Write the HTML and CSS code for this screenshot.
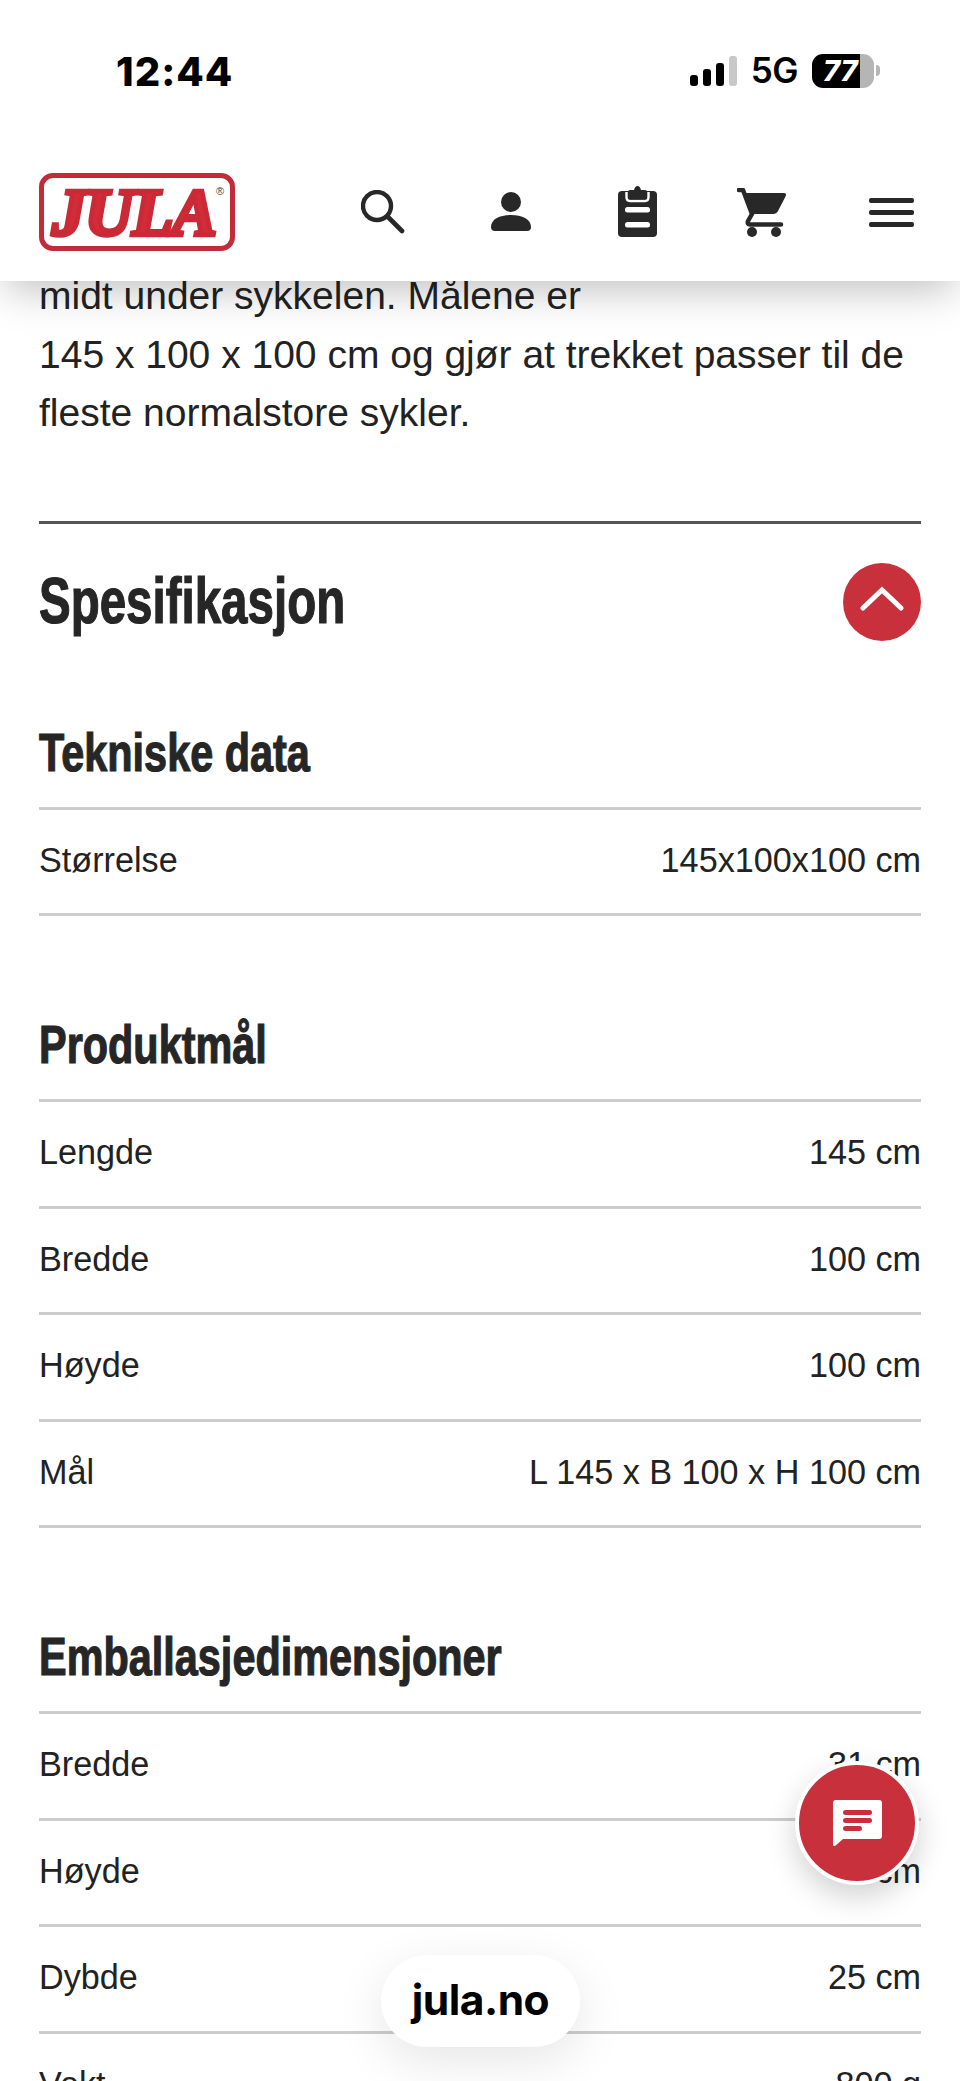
FILE: index.html
```html
<!DOCTYPE html>
<html lang="no">
<head>
<meta charset="utf-8">
<title>Jula – Spesifikasjon</title>
<link rel="stylesheet" href="styles.css">
</head>
<body>
<div class="screen">
  <header class="top">
    <div class="status">
      <span class="time">12:44</span>
      <div class="status-right">
        <div class="signal"><i class="b1"></i><i class="b2"></i><i class="b3"></i><i class="b4"></i></div>
        <span class="net">5G</span>
        <div class="battery"><span class="battery-num">77</span></div>
        <i class="battery-nub"></i>
      </div>
    </div>
    <nav class="nav">
      <a class="logo"><span class="logo-text">JULA</span><span class="logo-r">®</span></a>
      <svg class="ic ic-search" viewBox="0 0 44 44"><circle cx="16" cy="16" r="14" fill="none" stroke="#282828" stroke-width="4.4"/><path d="M26.5 26.5L41 41" stroke="#282828" stroke-width="4.6" stroke-linecap="round"/></svg>
      <svg class="ic ic-person" viewBox="0 0 40 40"><circle cx="20" cy="10" r="10" fill="#282828"/><path d="M0 35C0 27 9 23 20 23S40 27 40 35Q40 39 36 39H4Q0 39 0 35Z" fill="#282828"/></svg>
      <svg class="ic ic-clip" viewBox="0 0 39 51"><rect y="5" width="39" height="46" rx="4" fill="#282828"/><path d="M8.5 6V11Q8.5 15 12 15H27Q30.5 15 30.5 11V6" fill="none" stroke="#fff" stroke-width="2.4"/><path d="M10 12V6Q10 4 12 4H16Q17 0 19.500 0T23 4H27Q29 4 29 6V12Q29 13.500 27 13.500H12Q10 13.500 10 12Z" fill="#282828"/><rect x="7" y="21" width="25" height="5.500" rx="2.500" fill="#fff"/><rect x="7" y="36" width="25" height="5.500" rx="2.500" fill="#fff"/></svg>
      <svg class="ic ic-cart" viewBox="0 0 50 50"><path d="M6 5H47Q50 5 48.500 8.500L41 23Q39.500 26 36 26H14Z" fill="#282828"/><path d="M2 2H6L15 26L11 33Q10 36.500 13 36.500H44" fill="none" stroke="#282828" stroke-width="4.500" stroke-linecap="round" stroke-linejoin="round"/><circle cx="15" cy="44" r="5" fill="#282828"/><circle cx="39" cy="44" r="5" fill="#282828"/></svg>
      <div class="burger"><i></i><i></i><i></i></div>
    </nav>
  </header>

  <main class="content">
    <p class="lead">midt under sykkelen. Målene er<br>145 x 100 x 100 cm og gjør at trekket passer til de<br>fleste normalstore sykler.</p>
    <hr class="rule">
    <div class="spec-head">
      <h2>Spesifikasjon</h2>
      <button class="toggle" type="button"><svg viewBox="0 0 44 26"><path d="M3 22L22 4L41 22" fill="none" stroke="#fff" stroke-width="5" stroke-linecap="round" stroke-linejoin="miter"/></svg></button>
    </div>

    <section class="group first">
      <h3>Tekniske data</h3>
      <dl class="rows">
        <div class="row"><dt>Størrelse</dt><dd>145x100x100 cm</dd></div>
      </dl>
    </section>

    <section class="group">
      <h3>Produktmål</h3>
      <dl class="rows">
        <div class="row"><dt>Lengde</dt><dd>145 cm</dd></div>
        <div class="row"><dt>Bredde</dt><dd>100 cm</dd></div>
        <div class="row"><dt>Høyde</dt><dd>100 cm</dd></div>
        <div class="row"><dt>Mål</dt><dd>L 145 x B 100 x H 100 cm</dd></div>
      </dl>
    </section>

    <section class="group">
      <h3>Emballasjedimensjoner</h3>
      <dl class="rows">
        <div class="row"><dt>Bredde</dt><dd>31 cm</dd></div>
        <div class="row"><dt>Høyde</dt><dd>6 cm</dd></div>
        <div class="row"><dt>Dybde</dt><dd>25 cm</dd></div>
        <div class="row"><dt>Vekt</dt><dd>800 g</dd></div>
      </dl>
    </section>
  </main>

  <button class="chat" type="button"><svg viewBox="0 0 49 46"><path d="M3 0H46Q49 0 49 3V36Q49 39 46 39H10L2 46Q0 47 0 44V3Q0 0 3 0Z" fill="#fff"/><rect x="10" y="10" width="29" height="5" rx="2.500" fill="#c8303c"/><rect x="10" y="18" width="29" height="5" rx="2.500" fill="#c8303c"/><rect x="10" y="26" width="19" height="5" rx="2.500" fill="#c8303c"/></svg></button>
  <div class="url">jula.no</div>
</div>
</body>
</html>
```
FILE: styles.css
```css
* { box-sizing: border-box; }
html, body { margin: 0; padding: 0; background: #fff; }
body { font-family: "Liberation Sans", Arial, sans-serif; color: #222; }
.screen { position: relative; width: 960px; height: 2081px; overflow: hidden; background: #fff; }

.top { position: absolute; top: 0; left: 0; right: 0; height: 281px; background: #fff; z-index: 5; box-shadow: 0 14px 40px -6px rgba(0,0,0,.26); }
.status { height: 173px; display: flex; justify-content: space-between; padding: 50px 0 0 116px; align-items: flex-start; }
.time { font: 800 40px/44px Inter, sans-serif; color: #000; letter-spacing: 1px; }
.status-right { display: flex; align-items: flex-end; height: 38px; margin-right: 80px; }
.signal { display: flex; align-items: flex-end; gap: 5px; height: 30px; margin-right: 14px; margin-bottom: 2px; }
.signal i { width: 8px; border-radius: 3px; background: #000; display: block; }
.b1 { height: 11px; } .b2 { height: 17px; } .b3 { height: 23px; }
.signal .b4 { height: 30px; background: #c8c8c8; }
.net { font: 600 35px/36px Inter, sans-serif; color: #000; margin-right: 14px; letter-spacing: -.5px; }
.battery { width: 62px; height: 34px; border-radius: 11px; background: linear-gradient(90deg, #000 48px, #b5b5b5 48px); display: flex; align-items: center; padding-left: 11px; }
.battery-num { font: italic 800 29px/34px Inter, sans-serif; color: #fff; }
.battery-nub { width: 4px; height: 11px; background: #b5b5b5; border-radius: 0 4px 4px 0; margin: 0 0 12px 2px; }

.nav { position: relative; height: 108px; }
.logo { position: absolute; left: 39px; top: 0; width: 196px; height: 78px; border: 5px solid #c22c38; border-radius: 14px; display: flex; align-items: center; justify-content: center; background: #fff; }
.logo-text { font: italic 700 67px/67px "Liberation Serif", serif; color: #d42b38; -webkit-text-stroke: 4.5px #c92a36; letter-spacing: -1px; padding-right: 6px; }
.logo-r { position: absolute; right: 6px; top: 8px; font: 11px/11px "Liberation Sans", sans-serif; color: #444; }
.ic { position: absolute; display: block; }
.ic-search { left: 361px; top: 17px; width: 44px; height: 44px; }
.ic-person { left: 491px; top: 19px; width: 40px; height: 40px; }
.ic-clip { left: 618px; top: 13px; width: 39px; height: 51px; }
.ic-cart { left: 737px; top: 15px; width: 50px; height: 50px; }
.burger { position: absolute; left: 869px; top: 25px; width: 45px; display: flex; flex-direction: column; gap: 7px; }
.burger i { display: block; height: 5px; border-radius: 2px; background: #282828; }

.content { padding: 267px 39px 0; }
.lead { margin: 0; font-size: 39px; line-height: 58.5px; }
.rule { border: 0; height: 3px; background: #555; margin: 78px 0 0; }
.spec-head { display: flex; justify-content: space-between; align-items: center; margin-top: 39px; height: 78px; }
h2, h3 { margin: 0; font-family: "Liberation Sans", sans-serif; font-weight: 700; color: #262626; white-space: nowrap; transform-origin: left center; -webkit-text-stroke: 1.2px #262626; }
h2 { font-size: 64px; line-height: 76px; padding-bottom: 2px; transform: scaleX(.742); }
h3 { font-size: 54px; line-height: 60px; height: 60px; transform: scaleX(.767); }
.toggle { width: 78px; height: 78px; border: 0; border-radius: 50%; background: #c8303c; padding: 0; display: flex; align-items: center; justify-content: center; }
.toggle svg { width: 44px; height: 26px; display: block; margin-bottom: 6px; }
.group { margin-top: 98px; }
.group.first { margin-top: 81px; }
.rows { margin: 25px 0 0; border-top: 3px solid #ccc; }
.row { display: flex; justify-content: space-between; align-items: center; height: 106.5px; padding-bottom: 2px; border-bottom: 3px solid #ccc; font-size: 34.2px; }
.row dt, .row dd { margin: 0; }

.chat { position: absolute; left: 795px; top: 1761px; width: 124px; height: 124px; border-radius: 50%; background: #c8303c; border: 4px solid #fff; padding: 0; box-shadow: 0 12px 30px rgba(0,0,0,.18); display: flex; align-items: center; justify-content: center; z-index: 4; }
.chat svg { width: 49px; height: 46px; display: block; }
.url { position: absolute; left: 381px; top: 1955px; width: 199px; height: 92px; border-radius: 46px; background: #fff; box-shadow: 0 14px 50px rgba(0,0,0,.1); display: flex; align-items: center; justify-content: center; font: 700 42.5px/1 Inter, sans-serif; color: #000; letter-spacing: -.5px; padding-bottom: 2px; z-index: 4; }
```
